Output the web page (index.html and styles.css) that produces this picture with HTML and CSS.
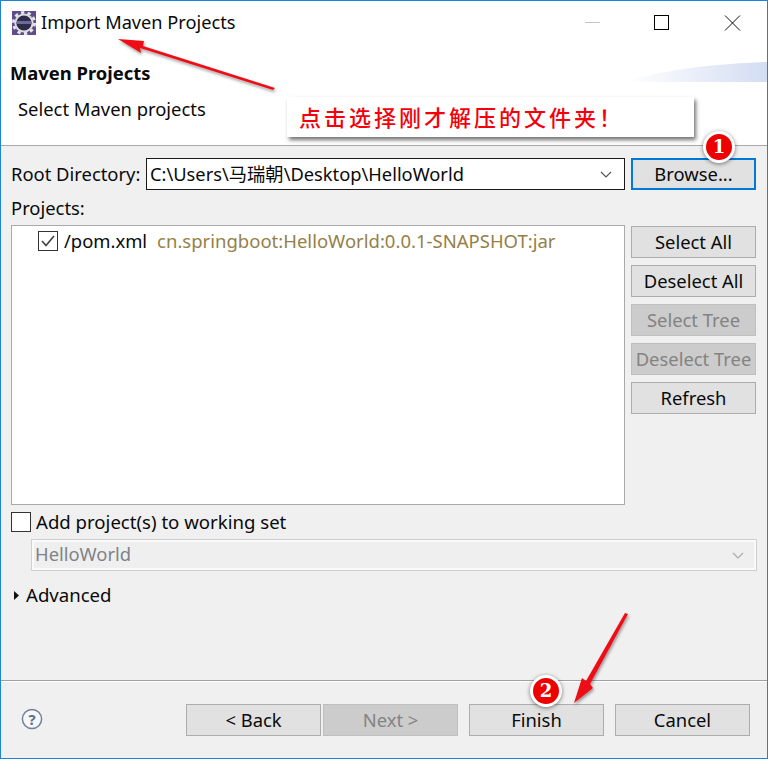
FILE: index.html
```html
<!DOCTYPE html>
<html lang="en">
<head>
<meta charset="utf-8">
<title>Import Maven Projects</title>
<link rel="stylesheet" href="styles.css">
</head>
<body>
<div class="window">
  <header class="top">
    <div class="titlebar">
      <svg class="app-icon" width="24" height="24" viewBox="0 0 24 24">
        <rect width="24" height="24" fill="#5f4c8c"/>
        <circle cx="12" cy="12" r="9.6" fill="#dcdcde"/>
        <circle cx="12" cy="12" r="10.6" fill="none" stroke="#e6e6e8" stroke-width="2.8" stroke-dasharray="3.3 3.36"/>
        <circle cx="12" cy="12" r="7.6" fill="#2d2a4a"/>
        <rect x="4.8" y="10" width="14.4" height="3" fill="#6f6a9c"/>
      </svg>
      <span class="title">Import Maven Projects</span>
      <svg class="win-controls" width="160" height="16" viewBox="0 0 160 16">
        <path d="M0 7.5H15" stroke="#c4c4c4" fill="none"/>
        <rect x="69.5" y="0.5" width="14" height="14" fill="none" stroke="#000"/>
        <path d="M140 0.5L155 15.5M155 0.5L140 15.5" stroke="#111" fill="none"/>
      </svg>
    </div>
    <div class="banner">
      <div class="banner-title">Maven Projects</div>
      <div class="banner-sub">Select Maven projects</div>
      <svg class="swoosh" width="141" height="21" viewBox="0 0 141 21">
        <defs><linearGradient id="sw" x1="0" x2="1" y1="0" y2="0"><stop offset="0" stop-color="#fff"/><stop offset="1" stop-color="#d3ddf2"/></linearGradient></defs>
        <path d="M0 21C40 8 90 3 141 1V21Z" fill="url(#sw)"/>
      </svg>
    </div>
  </header>

  <main class="content">
    <div class="root-row">
      <label class="root-label">Root Directory:</label>
      <div class="combo">
        <span class="combo-text">C:\Users\马瑞朝\Desktop\HelloWorld</span>
        <svg class="chev" width="12" height="7" viewBox="0 0 12 7"><path d="M1 1L6 6L11 1" fill="none" stroke="#555" stroke-width="1.2"/></svg>
      </div>
      <button class="btn btn-focus">Browse...</button>
    </div>
    <div class="projects-label">Projects:</div>
    <div class="projects-row">
      <div class="tree">
        <div class="tree-item">
          <span class="check check-on">
            <svg width="14" height="12" viewBox="0 0 14 12"><path d="M1 6L5 10.5L13 1" fill="none" stroke="#444" stroke-width="1.7"/></svg>
          </span>
          <span class="pom">/pom.xml</span>
          <span class="coord">cn.springboot:HelloWorld:0.0.1-SNAPSHOT:jar</span>
        </div>
      </div>
      <div class="side">
        <button class="btn">Select All</button>
        <button class="btn">Deselect All</button>
        <button class="btn btn-off">Select Tree</button>
        <button class="btn btn-off">Deselect Tree</button>
        <button class="btn">Refresh</button>
      </div>
    </div>
    <div class="ws-row">
      <span class="check"></span>
      <span class="ws-text">Add project(s) to working set</span>
    </div>
    <div class="ws-combo">
      <span>HelloWorld</span>
      <svg class="chev" width="12" height="7" viewBox="0 0 12 7"><path d="M1 1L6 6L11 1" fill="none" stroke="#aaa" stroke-width="1.2"/></svg>
    </div>
    <div class="advanced">
      <svg width="5" height="9" viewBox="0 0 5 9"><path d="M0 0L5 4.5L0 9Z" fill="#111"/></svg>
      <span class="adv-text">Advanced</span>
    </div>
  </main>

  <footer class="footer">
    <svg class="help" width="22" height="22" viewBox="0 0 22 22">
      <circle cx="11" cy="11" r="9.6" fill="#f6f7f9" stroke="#73829c" stroke-width="1.5"/>
      <text x="11" y="16.5" text-anchor="middle" class="help-q">?</text>
    </svg>
    <div class="nav">
      <button class="btn">&lt; Back</button>
      <button class="btn btn-off">Next &gt;</button>
      <button class="btn btn-finish">Finish</button>
      <button class="btn btn-cancel">Cancel</button>
    </div>
  </footer>

  <svg class="arrows" width="768" height="759" viewBox="0 0 768 759">
    <defs><filter id="sh" x="-20%" y="-20%" width="140%" height="140%"><feDropShadow dx="1" dy="2" stdDeviation="1.5" flood-color="#000" flood-opacity=".4"/></filter></defs>
    <path filter="url(#sh)" fill="#ee0f14" d="M118 39L144 41L143 46L275 88L273 90L140 48L141 53Z"/>
    <path filter="url(#sh)" fill="#ee0f14" d="M574 703L582 678L586 681L625 613L628 614L590 684L593 688Z"/>
  </svg>
  <div class="callout">点击选择刚才解压的文件夹！</div>
  <div class="badge badge-1">1</div>
  <div class="badge badge-2">2</div>
</div>
</body>
</html>
```
FILE: styles.css
```css
* { box-sizing: border-box; }
html, body { margin: 0; padding: 0; }
body {
  width: 768px;
  height: 759px;
  overflow: hidden;
  font-family: "Noto Sans", "Noto Sans CJK SC", sans-serif;
  font-size: 18.4px;
  color: #0a0a0a;
}
.window {
  position: relative;
  width: 768px;
  height: 759px;
  border: 1px solid #1e84d8;
  background: #f0f0f0;
  display: flex;
  flex-direction: column;
}
.top {
  background: #fff;
  height: 145px;
  border-bottom: 1px solid #a8a8a8;
  flex: none;
}
.titlebar {
  height: 43px;
  display: flex;
  align-items: center;
  padding-left: 11px;
  padding-right: 22px;
}
.app-icon { flex: none; margin-top: 1px; }
.title { margin-left: 5px; line-height: 24px; margin-bottom: 2px; font-size: 18.2px; }
.win-controls { margin-left: auto; flex: none; }
.banner { position: relative; padding-left: 9px; height: 101px; }
.banner-title { font-weight: 700; line-height: 24px; margin-top: 17px; }
.banner-sub { line-height: 24px; margin-top: 12px; margin-left: 8px; }
.swoosh { position: absolute; right: 0; top: 0; }
.content {
  flex: 1;
  min-height: 0;
  padding: 12px 11px 0 10px;
  display: flex;
  flex-direction: column;
}
.root-row { display: flex; height: 32px; }
.root-label { width: 135px; flex: none; line-height: 32px; }
.combo {
  width: 479px;
  flex: none;
  background: #fff;
  border: 1px solid #1a1a1a;
  display: flex;
  align-items: center;
  padding: 0 12px 0 3px;
  justify-content: space-between;
}
.combo-text { line-height: 28px; white-space: nowrap; font-size: 18.3px; }
.chev { flex: none; }
.btn {
  font: inherit;
  color: #0a0a0a;
  background: #e1e1e1;
  border: 1px solid #adadad;
  height: 32px;
  width: 125px;
  padding: 0;
  line-height: 28px;
  flex: none;
  white-space: nowrap;
}
.btn-focus { margin-left: 6px; border: 2px solid #0078d7; }
.btn-off { background: #cccccc; color: #838383; border-color: #bfbfbf; }
.projects-label { line-height: 24px; margin-top: 6px; height: 29px; }
.projects-row { display: flex; height: 280px; gap: 6px; }
.tree {
  width: 614px;
  flex: none;
  background: #fff;
  border: 1px solid #a9a9a9;
}
.tree-item { display: flex; align-items: center; height: 28px; margin-top: 1px; padding-left: 26px; }
.check {
  width: 20px;
  height: 20px;
  flex: none;
  background: #fff;
  border: 1px solid #333;
  display: flex;
  align-items: center;
  justify-content: center;
}
.pom { margin-left: 6px; margin-bottom: 2px; }
.coord { margin-left: 10px; color: #957f48; white-space: nowrap; margin-bottom: 2px; font-size: 18.5px; }
.side { display: flex; flex-direction: column; gap: 7px; padding-top: 1px; }
.ws-row { display: flex; align-items: center; gap: 5px; margin-top: 7px; height: 20px; }
.ws-text { font-size: 18.6px; margin-bottom: 2px; }
.ws-combo {
  margin: 7px -1px 0 20px;
  height: 32px;
  border: 1px solid #cfcfcf;
  box-shadow: inset 0 0 0 2px #fafafa;
  background: #efefef;
  color: #7f8389;
  display: flex;
  align-items: center;
  justify-content: space-between;
  padding: 0 12px 4px 3px;
}
.ws-combo .chev { margin-top: 4px; }
.advanced { display: flex; align-items: center; gap: 7px; margin-top: 12px; height: 24px; padding-left: 3px; }
.adv-text { margin-bottom: 2px; font-size: 18.6px; }
.footer {
  flex: none;
  height: 78px;
  border-top: 1px solid #a0a0a0;
  box-shadow: inset 0 1px 0 #fff;
  display: flex;
  padding: 23px 17px 0 20px;
}
.help { flex: none; margin-top: 4px; }
.help-q { font-family: "Noto Sans", sans-serif; font-size: 15px; font-weight: 700; fill: #5f6f8c; }
.nav { margin-left: auto; display: flex; gap: 2px; }
.nav .btn { width: 135px; }
.btn-finish { margin-left: 9px; }
.btn-cancel { margin-left: 9px; }
.arrows { position: absolute; left: -1px; top: -1px; pointer-events: none; }
.callout {
  position: absolute;
  left: 286px;
  top: 96px;
  width: 407px;
  height: 40px;
  background: #fff;
  box-shadow: 2px 3px 4px rgba(0, 0, 0, .55);
  color: #f5000a;
  font-size: 22px;
  font-weight: 500;
  letter-spacing: 3px;
  line-height: 40px;
  padding-left: 12px;
  white-space: nowrap;
}
.badge {
  position: absolute;
  width: 32px;
  height: 32px;
  border-radius: 50%;
  background: #ee0000;
  border: 3px solid #fff;
  box-shadow: 0 1px 4px rgba(0, 0, 0, .5);
  color: #fff;
  font-family: "DejaVu Serif", serif;
  font-weight: 700;
  font-size: 18px;
  line-height: 26px;
  text-align: center;
}
.badge-1 { left: 702px; top: 130px; }
.badge-2 { left: 529px; top: 674px; }
```
